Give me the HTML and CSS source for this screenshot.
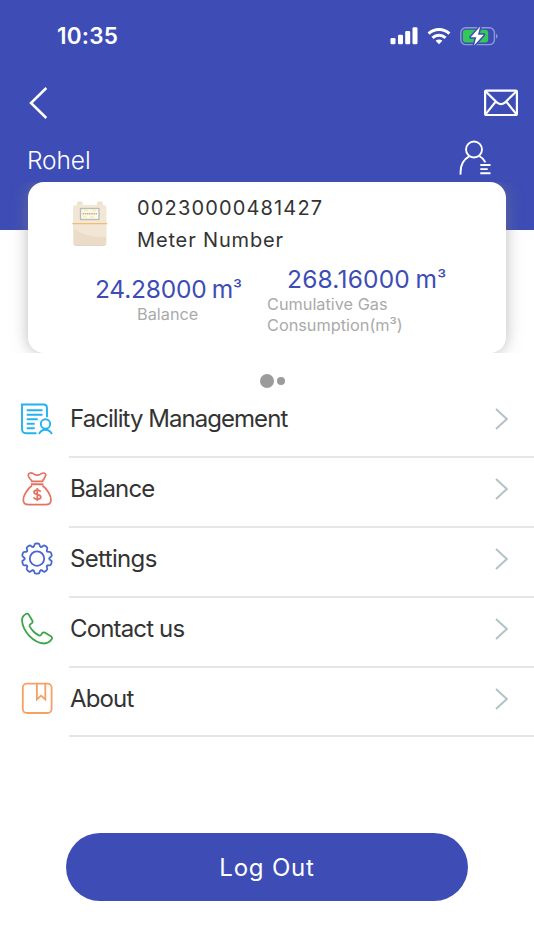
FILE: index.html
```html
<!DOCTYPE html>
<html lang="en">
<head>
    <meta charset="UTF-8">
    <meta name="viewport" content="width=device-width, initial-scale=1.0">
    <title>My Account</title>
    <link rel="stylesheet" href="styles.css">
</head>
<body>
    <!-- Header -->
    <header class="header">
        <div class="status-bar">
            <span class="time">10:35</span>
            <div class="status-icons">
                <svg width="28" height="18" viewBox="0 0 28 18" fill="#fff">
                    <rect x="0.5" y="11" width="5" height="6.2" rx="1.3"/>
                    <rect x="8" y="7.8" width="5" height="9.4" rx="1.3"/>
                    <rect x="15.2" y="4" width="5" height="13.2" rx="1.3"/>
                    <rect x="22.5" y="0.3" width="5" height="16.9" rx="1.3"/>
                </svg>
                <svg class="wifi" width="24" height="18" viewBox="0 0 24 18" fill="none" stroke="#fff" stroke-width="3">
                    <path d="M1.6 6.6a15 15 0 0 1 20.8 0"/>
                    <path d="M5.5 10.9a9.3 9.3 0 0 1 13 0"/>
                    <path d="M12 17.2l-3.4-3.4a4.9 4.9 0 0 1 6.8 0z" fill="#fff" stroke="none"/>
                </svg>
                <svg class="battery" width="38" height="20" viewBox="0 0 38 20">
                    <rect x="0.8" y="1.8" width="33.6" height="16.8" rx="5" fill="none" stroke="#8f98d6" stroke-width="1.4"/>
                    <path d="M36 7.8c2 .8 2 4 0 4.8z" fill="#8f98d6"/>
                    <rect x="2.8" y="3.8" width="25.4" height="12.8" rx="3" fill="#34c759"/>
                    <path d="M20.2 .6l-9.5 10.7h5.6l-2.3 8.1 9.8-10.7h-5.8z" fill="#fff" stroke="#3d4db5" stroke-width="3" stroke-linejoin="round" paint-order="stroke"/>
                </svg>
            </div>
        </div>
        <div class="nav-bar">
            <svg width="20" height="34" viewBox="0 0 20 34" fill="none" stroke="#fff" stroke-width="2.5">
                <path d="M18.3 2L3 17l15.3 15"/>
            </svg>
            <svg class="mail" width="34" height="27" viewBox="0 0 34 27" fill="none" stroke="#fff" stroke-width="2.2" stroke-linejoin="round">
                <rect x="1.1" y="1.6" width="31.8" height="24.4" rx="1"/>
                <path d="M1.5 2.2l11.7 11.5q3.8 3 7.6 0L32.5 2.2M1.5 25.4l10-12.5M32.5 25.4l-10-12.5"/>
            </svg>
        </div>
        <div class="user-row">
            <span class="user-name">Rohel</span>
            <svg width="33" height="36" viewBox="0 0 33 36" fill="none" stroke="#fff" stroke-width="1.9">
                <circle cx="15" cy="9.5" r="8"/>
                <path d="M1.6 34.6c-.6-8.8 2.6-15 8.6-18.2M20.2 16c2.8 1.4 4.8 3.4 6.2 6.3"/>
                <path d="M21.3 25h10.200M21.3 29.100h7.400M21.3 33.200h10.200"/>
            </svg>
        </div>
    </header>

    <!-- Meter card -->
    <div class="slider">
        <div class="card">
            <div class="meter">
                <svg class="meter-img" width="36" height="46" viewBox="0 0 36 46">
                    <path d="M5 5V1.5Q5 .6 6 .6h3.6q1 0 1 .9V5zM25 5V1.5q0-.9 1-.9h3.6q1 0 1 .9V5z" fill="#efe2d1"/>
                    <rect x="1" y="4" width="33.5" height="40.5" rx="3" fill="#f2e6d6"/>
                    <path d="M2 28q14 9 32 8v5.5q0 3-3 3H5q-3 0-3-3z" fill="#eadcc8"/>
                    <path d="M1.6 43q.8 1.5 3.4 1.5h26q2.6 0 3.2-1.5" fill="none" stroke="#dfcfb9" stroke-width=".8"/>
                    <rect x="8.5" y="7.5" width="18.5" height="11" fill="#fdf9e8" stroke="#b5bdb8" stroke-width="1.3"/>
                    <path d="M12 9.5h4M20 9.5h4M11 16h3M18 16h4" stroke="#fbecab" stroke-width="1.6"/>
                    <path d="M10.5 12.8h14.5" stroke="#c3b49b" stroke-width="1.6" stroke-dasharray="1.6 .6"/>
                    <path d="M.3 22.7h35" stroke="#f5bd6b" stroke-width="1.2"/>
                </svg>
                <div class="meter-info">
                    <div class="meter-id">00230000481427</div>
                    <div class="meter-label">Meter Number</div>
                </div>
            </div>
            <div class="values">
                <div class="value-box balance">
                    <div class="value">24.28000 m<span class="cube">³</span></div>
                    <div class="value-label">Balance</div>
                </div>
                <div class="value-box consumption">
                    <div class="value">268.16000 m<span class="cube">³</span></div>
                    <div class="value-label">Cumulative Gas<br>Consumption(m³)</div>
                </div>
            </div>
        </div>
    </div>
    <div class="dots">
        <span class="dot active"></span>
        <span class="dot"></span>
    </div>

    <!-- Menu -->
    <ul class="menu">
        <li class="menu-item">
            <svg class="menu-icon" width="34" height="34" viewBox="0 0 34 34" fill="none" stroke="#22b2f2" stroke-width="1.9">
                <path d="M16.5 31.2H6q-4 0-4-4V2.500h21.500q3.500 0 3.500 3.500v9.200"/>
                <path d="M6.700 8.200h15.800M6.700 12.700h15.800M6.700 17.200h11M6.700 21.800h8M6.700 26.300h8"/>
                <circle cx="25.5" cy="22" r="4.7"/>
                <path d="M19 32c1.400-3 3.600-4.300 6.400-4.300s5 1.300 6.500 4.300"/>
            </svg>
            <div class="menu-body">
                <span class="menu-text facility">Facility Management</span>
                <svg class="arrow" width="16" height="24" viewBox="0 0 16 24"><path d="M2 2l10.8 10L2 22"/></svg>
            </div>
        </li>
        <li class="menu-item">
            <svg class="menu-icon" width="34" height="36" viewBox="0 0 34 36" fill="none" stroke="#e37261" stroke-width="1.7" stroke-linejoin="round">
                <path d="M12 10C9.8 8 8 5.5 8.3 3.5 9 1.5 11.5 1.8 13 2.5c2.200 2.200 6.200 2.200 8.400 0 1.600-.7 4-.9 4.300 1C25.8 5.5 24 8 22.3 10"/>
                <path d="M11 10.4h12.400M11 13.2h12.400" stroke-width="1.9"/>
                <path d="M12 14.5C7.5 18 3.3 24 3.3 29q0 4.700 5.500 4.700h16.700q5.500 0 5.500-4.700c0-5-4-11-8.600-14.500"/>
                <path d="M20.7 20.7c-1.500-2.300-6.700-2-6.700.6 0 3.200 6.800 1.400 6.800 4.600 0 2.900-5.800 3-7.300.5M17.3 17.100v13" stroke-width="1.7"/>
            </svg>
            <div class="menu-body">
                <span class="menu-text">Balance</span>
                <svg class="arrow" width="16" height="24" viewBox="0 0 16 24"><path d="M2 2l10.8 10L2 22"/></svg>
            </div>
        </li>
        <li class="menu-item">
            <svg class="menu-icon" width="34" height="34" viewBox="-17 -16.6 34 34" fill="none" stroke="#4a66cf" stroke-width="1.8" stroke-linecap="round">
                <!-- one tooth, repeated every 36deg -->
                <defs>
                    <path id="tooth" d="M-3.83-11.79Q-2.9-12-2.7-13.3-2.5-15.1-1-15.1H1Q2.5-15.1 2.7-13.3 2.9-12 3.83-11.79"/>
                </defs>
                <use href="#tooth"/>
                <use href="#tooth" transform="rotate(36)"/>
                <use href="#tooth" transform="rotate(72)"/>
                <use href="#tooth" transform="rotate(108)"/>
                <use href="#tooth" transform="rotate(144)"/>
                <use href="#tooth" transform="rotate(180)"/>
                <use href="#tooth" transform="rotate(216)"/>
                <use href="#tooth" transform="rotate(252)"/>
                <use href="#tooth" transform="rotate(288)"/>
                <use href="#tooth" transform="rotate(324)"/>
                <circle r="7.2"/>
            </svg>
            <div class="menu-body">
                <span class="menu-text settings">Settings</span>
                <svg class="arrow" width="16" height="24" viewBox="0 0 16 24"><path d="M2 2l10.8 10L2 22"/></svg>
            </div>
        </li>
        <li class="menu-item">
            <svg class="menu-icon" width="34" height="34" viewBox="0 0.5 34 34" fill="none" stroke="#3aa648" stroke-width="1.8" stroke-linejoin="round">
                <path d="M6.3 2.3C3.5 3.8 1.9 6.3 2 9c.8 11 11.5 22.3 22 23 3.5-.2 6.3-2.3 7.8-4.6.5-.9.3-1.7-.5-2.3l-6.6-4c-1-.5-1.9-.3-2.5.5-.8 1.6-1.6 2.7-2.7 2.5-3.7-1.3-8.3-5.8-10-9.6-.3-1.2.8-1.9 2.2-2.7 1-.7 1.2-1.5.7-2.5L8.6 2.9q-.9-1.3-2.3-.6z"/>
            </svg>
            <div class="menu-body">
                <span class="menu-text">Contact us</span>
                <svg class="arrow" width="16" height="24" viewBox="0 0 16 24"><path d="M2 2l10.8 10L2 22"/></svg>
            </div>
        </li>
        <li class="menu-item">
            <svg class="menu-icon" width="34" height="34" viewBox="0 0 34 34" fill="none" stroke="#f7a064" stroke-width="1.8">
                <rect x="2.8" y="1.6" width="28.8" height="29.4" rx="4"/>
                <path d="M16.9 1.8v15.6l4.2-3.8 4.2 3.8V1.8"/>
            </svg>
            <div class="menu-body">
                <span class="menu-text">About</span>
                <svg class="arrow" width="16" height="24" viewBox="0 0 16 24"><path d="M2 2l10.8 10L2 22"/></svg>
            </div>
        </li>
    </ul>

    <button class="logout">Log Out</button>
</body>
</html>
```
FILE: styles.css
```css
* {
    box-sizing: border-box;
}
body {
    margin: 0;
    height: 950px;
    background: #fff;
    font-family: Inter, "Liberation Sans", sans-serif;
    color: #333;
    overflow: hidden;
}
svg {
    display: block;
    flex: none;
}

/* header */
.header {
    height: 230px;
    background: #3d4db5;
    color: #fff;
}
.status-bar {
    display: flex;
    justify-content: space-between;
    align-items: center;
    height: 72px;
    padding: 0 36px 0 57px;
}
.time {
    padding-bottom: 2px;
    font-size: 22.5px;
    font-weight: 600;
    letter-spacing: 0.2px;
}
.status-icons {
    display: flex;
    align-items: center;
}
.wifi {
    margin-left: 9px;
}
.battery {
    margin-left: 9px;
}
.nav-bar {
    display: flex;
    justify-content: space-between;
    align-items: center;
    height: 62px;
    padding: 0 16px 0 28px;
}
.mail {
    margin-top: -1px;
}
.user-row {
    display: flex;
    justify-content: space-between;
    align-items: center;
    height: 48px;
    padding: 0 42px 0 27px;
}
.user-name {
    font-size: 24.5px;
    line-height: 30px;
    letter-spacing: -0.1px;
    font-weight: 300;
    padding-top: 3px;
}

/* meter card */
.slider {
    margin-top: -48px;
    padding: 0 28px;
    overflow: hidden;
}
.card {
    height: 171px;
    background: #fff;
    border-radius: 16px;
    box-shadow: 0 0 16px rgba(130, 130, 130, 0.55);
}
.meter {
    display: flex;
    padding: 10px 0 0 44px;
}
.meter-img {
    margin-top: 9px;
}
.meter-info {
    margin-left: 29px;
    font-size: 20px;
    line-height: 32px;
}
.meter-id {
    letter-spacing: 1.15px;
}
.meter-label {
    letter-spacing: 0.85px;
}
.values {
    display: flex;
    align-items: center;
    padding-left: 67px;
    margin-top: 8px;
}
.value-box {
    white-space: nowrap;
}
.balance {
    width: 172px;
}
.value {
    font-size: 24.5px;
    line-height: 30px;
    letter-spacing: -0.2px;
    word-spacing: -1.5px;
    color: #3d4db5;
}
.cube {
    font-size: 20px;
    line-height: 1;
    vertical-align: 2px;
}
.value-label {
    font-size: 16.3px;
    line-height: 20.5px;
    color: #aaa;
}
.balance .value-label {
    padding-left: 42px;
}
.consumption .value {
    padding-left: 20px;
    letter-spacing: 0.2px;
}

.dots {
    display: flex;
    justify-content: center;
    align-items: center;
    gap: 3px;
    height: 14px;
    margin: 21px 0 0 11px;
}
.dot {
    width: 8px;
    height: 8px;
    border-radius: 50%;
    background: #9b9b9b;
}
.dot.active {
    width: 14px;
    height: 14px;
}

/* menu */
.menu {
    list-style: none;
    margin: 0;
    padding: 0;
}
.menu-item {
    display: flex;
    align-items: center;
    height: 69.9px;
    padding-left: 20px;
}
.menu-body {
    flex: 1;
    display: flex;
    justify-content: space-between;
    align-items: center;
    height: 100%;
    margin-left: 15px;
    padding: 0 24px 6px 1px;
    border-bottom: 2px solid #e6e6e6;
}
.menu-icon {
    margin-top: -8px;
}
.menu-text {
    padding-bottom: 1px;
    font-size: 24px;
    letter-spacing: -0.85px;
}
.facility {
    letter-spacing: -0.95px;
}
.settings {
    letter-spacing: -0.65px;
}
.arrow path {
    fill: none;
    stroke: #b4c2c8;
    stroke-width: 2;
}

.logout {
    display: block;
    width: 402px;
    height: 68.5px;
    margin: 95.5px auto 0;
    border: 0;
    border-radius: 35px;
    background: #3d4db5;
    color: #fff;
    font-family: inherit;
    font-size: 24px;
    letter-spacing: 0.8px;
}
```
